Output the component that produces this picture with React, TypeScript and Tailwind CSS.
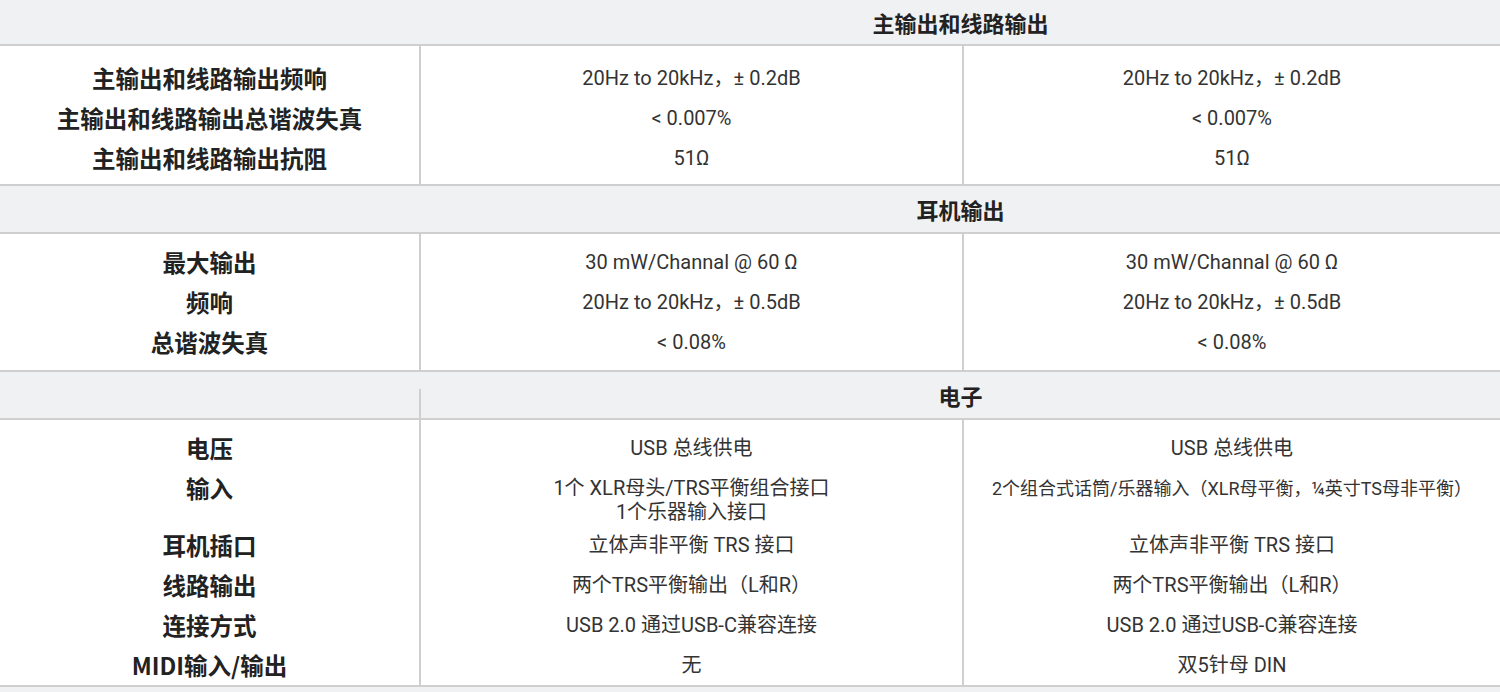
import React from 'react';

type Row = { label: string; a: React.ReactNode; b: React.ReactNode; tall?: boolean };

const mainRows: Row[] = [
  { label: '主输出和线路输出频响', a: '20Hz to 20kHz，± 0.2dB', b: '20Hz to 20kHz，± 0.2dB' },
  { label: '主输出和线路输出总谐波失真', a: '< 0.007%', b: '< 0.007%' },
  { label: '主输出和线路输出抗阻', a: '51Ω', b: '51Ω' },
];

const phoneRows: Row[] = [
  { label: '最大输出', a: '30 mW/Channal @ 60 Ω', b: '30 mW/Channal @ 60 Ω' },
  { label: '频响', a: '20Hz to 20kHz，± 0.5dB', b: '20Hz to 20kHz，± 0.5dB' },
  { label: '总谐波失真', a: '< 0.08%', b: '< 0.08%' },
];

const elecRows: Row[] = [
  { label: '电压', a: 'USB 总线供电', b: 'USB 总线供电' },
  {
    label: '输入',
    a: (
      <>
        1个 XLR母头/TRS平衡组合接口
        <br />
        1个乐器输入接口
      </>
    ),
    b: <span className="text-[18px]">2个组合式话筒/乐器输入（XLR母平衡，¼英寸TS母非平衡）</span>,
    tall: true,
  },
  { label: '耳机插口', a: '立体声非平衡 TRS 接口', b: '立体声非平衡 TRS 接口' },
  { label: '线路输出', a: '两个TRS平衡输出（L和R）', b: '两个TRS平衡输出（L和R）' },
  { label: '连接方式', a: 'USB 2.0 通过USB-C兼容连接', b: 'USB 2.0 通过USB-C兼容连接' },
  { label: 'MIDI输入/输出', a: '无', b: '双5针母 DIN' },
];

const labelFont = "font-['Noto_Sans_CJK_SC',sans-serif]";
const valueFont = "font-['Roboto','Noto_Sans_CJK_SC',sans-serif]";

function Header({ title, h }: { title: string; h: string }) {
  return (
    <div className={`flex ${h} bg-[#f0f1f3] border-b-2 border-[#cfcfcf]`}>
      <div className="w-[421px]" />
      <div className={`flex-1 flex items-center justify-center text-[22px] font-bold text-[#222] ${labelFont}`}>
        {title}
      </div>
    </div>
  );
}

function Spacer({ h }: { h: string }) {
  return (
    <>
      <div className={`${h} border-r-2 border-[#cfcfcf]`} />
      <div className={`${h} border-r-2 border-[#cfcfcf]`} />
      <div className={h} />
    </>
  );
}

function SpecBlock({ rows, top, bottom }: { rows: Row[]; top: string; bottom: string }) {
  return (
    <div className="grid grid-cols-[421px_543px_1fr] border-b-2 border-[#cfcfcf]">
      <Spacer h={top} />
      {rows.map((r, i) => {
        const val = r.tall ? 'leading-[24px] pt-[8px] pb-[1px]' : 'leading-[40px]';
        return (
          <React.Fragment key={i}>
            <div
              className={`border-r-2 border-[#cfcfcf] text-center text-[23.5px] font-bold text-[#222] leading-[40px] ${labelFont}`}
            >
              {r.label}
            </div>
            <div className={`border-r-2 border-[#cfcfcf] text-center text-[20px] text-[#333] ${valueFont} ${val}`}>
              {r.a}
            </div>
            <div className={`text-center text-[20px] text-[#333] ${valueFont} ${val}`}>{r.b}</div>
          </React.Fragment>
        );
      })}
      <Spacer h={bottom} />
    </div>
  );
}

export default function App() {
  return (
    <div className="w-[1500px] h-[692px] overflow-hidden bg-white">
      <Header title="主输出和线路输出" h="h-[46px]" />
      <SpecBlock rows={mainRows} top="h-[12px]" bottom="h-[6px]" />
      <Header title="耳机输出" h="h-[48px]" />
      <SpecBlock rows={phoneRows} top="h-[8px]" bottom="h-[8px]" />
      <div className="flex h-[48px] bg-[#f0f1f3] border-b-2 border-[#cfcfcf]">
        <div className="w-[419px]" />
        <div className="flex-1 mt-[17px] border-l-2 border-[#cfcfcf] flex justify-center">
          <span className={`-mt-[6px] text-[22px] leading-[24px] font-bold text-[#222] ${labelFont}`}>电子</span>
        </div>
      </div>
      <SpecBlock rows={elecRows} top="h-[8px]" bottom="h-0" />
      <div className="h-[10px] bg-[#f0f1f3]" />
    </div>
  );
}
